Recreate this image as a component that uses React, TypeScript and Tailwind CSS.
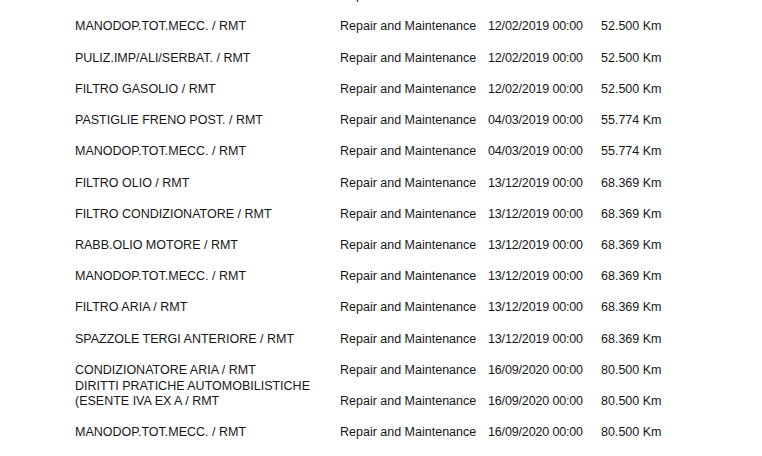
import * as React from 'react';

interface ServiceRow {
  item: string[];
  type: string;
  date: string;
  km: string;
}

const rows: ServiceRow[] = [
  { item: ['FILTRO ARIA / RMT'], type: 'Repair and Maintenance', date: '12/02/2019 00:00', km: '52.500 Km' },
  { item: ['MANODOP.TOT.MECC. / RMT'], type: 'Repair and Maintenance', date: '12/02/2019 00:00', km: '52.500 Km' },
  { item: ['PULIZ.IMP/ALI/SERBAT. / RMT'], type: 'Repair and Maintenance', date: '12/02/2019 00:00', km: '52.500 Km' },
  { item: ['FILTRO GASOLIO / RMT'], type: 'Repair and Maintenance', date: '12/02/2019 00:00', km: '52.500 Km' },
  { item: ['PASTIGLIE FRENO POST. / RMT'], type: 'Repair and Maintenance', date: '04/03/2019 00:00', km: '55.774 Km' },
  { item: ['MANODOP.TOT.MECC. / RMT'], type: 'Repair and Maintenance', date: '04/03/2019 00:00', km: '55.774 Km' },
  { item: ['FILTRO OLIO / RMT'], type: 'Repair and Maintenance', date: '13/12/2019 00:00', km: '68.369 Km' },
  { item: ['FILTRO CONDIZIONATORE / RMT'], type: 'Repair and Maintenance', date: '13/12/2019 00:00', km: '68.369 Km' },
  { item: ['RABB.OLIO MOTORE / RMT'], type: 'Repair and Maintenance', date: '13/12/2019 00:00', km: '68.369 Km' },
  { item: ['MANODOP.TOT.MECC. / RMT'], type: 'Repair and Maintenance', date: '13/12/2019 00:00', km: '68.369 Km' },
  { item: ['FILTRO ARIA / RMT'], type: 'Repair and Maintenance', date: '13/12/2019 00:00', km: '68.369 Km' },
  { item: ['SPAZZOLE TERGI ANTERIORE / RMT'], type: 'Repair and Maintenance', date: '13/12/2019 00:00', km: '68.369 Km' },
  { item: ['CONDIZIONATORE ARIA / RMT'], type: 'Repair and Maintenance', date: '16/09/2020 00:00', km: '80.500 Km' },
  {
    item: ['DIRITTI PRATICHE AUTOMOBILISTICHE', '(ESENTE IVA EX A / RMT'],
    type: 'Repair and Maintenance',
    date: '16/09/2020 00:00',
    km: '80.500 Km',
  },
  { item: ['MANODOP.TOT.MECC. / RMT'], type: 'Repair and Maintenance', date: '16/09/2020 00:00', km: '80.500 Km' },
];

export default function App() {
  return (
    <div
      className="h-[456px] w-[762px] overflow-hidden bg-white text-[12.5px] leading-[15px] text-[#161616]"
      style={{ fontFamily: '"Liberation Sans", Arial, sans-serif' }}
    >
      <div className="-mt-[28px] pl-[75px]">
        {rows.map((row, i) => (
          <div
            key={i}
            className="grid h-[31.23px] grid-cols-[265px_148px_113px_auto] items-end"
          >
            <div className="flex flex-col whitespace-nowrap">
              {row.item.map((line, j) => (
                <span key={j}>{line}</span>
              ))}
            </div>
            <div className="whitespace-nowrap">{row.type}</div>
            <div className="whitespace-nowrap tracking-[-0.15px]">{row.date}</div>
            <div className="whitespace-nowrap">{row.km}</div>
          </div>
        ))}
      </div>
    </div>
  );
}
